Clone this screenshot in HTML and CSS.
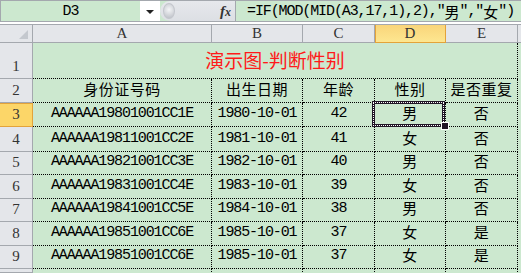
FILE: index.html
```html
<!DOCTYPE html>
<html lang="zh-CN">
<head>
  <meta charset="UTF-8" />
  <title>演示图-判断性别</title>
  <link rel="stylesheet" href="styles.css">
</head>
<body>
  <div class="formula-bar">
    <div class="name-box">D3</div>
    <div class="name-drop"><span class="caret"></span></div>
    <div class="bar-tools"><span class="grip"></span><span class="fx">f<i>x</i></span></div>
    <div class="formula">=IF(MOD(MID(A3,17,1),2),"<span class="cjk">男</span>","<span class="cjk">女</span>")</div>
  </div>
  <div class="bar-gap"></div>

  <div class="sheet">
    <div class="corner"></div>
    <div class="col-head">A</div>
    <div class="col-head">B</div>
    <div class="col-head">C</div>
    <div class="col-head active">D</div>
    <div class="col-head">E</div>
    <div class="col-head rest"></div>

    <div class="row-head">1</div>
    <div class="cell title">演示图-判断性别</div>
    <div class="cell rest"></div>

    <div class="row-head">2</div>
    <div class="cell cjk">身份证号码</div>
    <div class="cell cjk">出生日期</div>
    <div class="cell cjk">年龄</div>
    <div class="cell cjk">性别</div>
    <div class="cell cjk">是否重复</div>
    <div class="cell rest"></div>
  </div>

  <script>
    const sheet = document.querySelector(".sheet");
    const rows = [
      ["AAAAAA19801001CC1E", "1980-10-01", "42", "男", "否"],
      ["AAAAAA19811001CC2E", "1981-10-01", "41", "女", "否"],
      ["AAAAAA19821001CC3E", "1982-10-01", "40", "男", "否"],
      ["AAAAAA19831001CC4E", "1983-10-01", "39", "女", "否"],
      ["AAAAAA19841001CC5E", "1984-10-01", "38", "男", "否"],
      ["AAAAAA19851001CC6E", "1985-10-01", "37", "女", "是"],
      ["AAAAAA19851001CC6E", "1985-10-01", "37", "女", "是"]
    ];

    function addCell(cls, text) {
      const el = document.createElement("div");
      el.className = cls;
      el.textContent = text;
      sheet.appendChild(el);
      return el;
    }

    rows.forEach((r, i) => {
      const n = i + 3;
      addCell(n === 3 ? "row-head active" : "row-head", n);
      r.forEach((v, j) => {
        const cell = addCell(j > 2 ? "cell cjk" : "cell", v);
        if (n === 3 && j === 3) {
          cell.classList.add("selected");
          const handle = document.createElement("span");
          handle.className = "handle";
          cell.appendChild(handle);
        }
      });
      addCell("cell rest", "");
    });

    // sliver of row 10 at the bottom edge
    addCell("row-head", "");
    for (let j = 0; j < 5; j++) addCell("cell", "");
    addCell("cell rest", "");
  </script>
</body>
</html>
```

FILE: styles.css
```css
html, body {
  margin: 0;
  padding: 0;
  width: 521px;
  height: 273px;
  overflow: hidden;
  background: #cce8cf;
  font-family: "Liberation Mono", "Noto Sans CJK SC", monospace;
  color: #000;
}

.cjk {
  font-family: "Noto Sans CJK SC", sans-serif;
}

/* FORMULA BAR */
.formula-bar {
  display: flex;
  height: 20px;
  border-top: 1px solid #a4a8ae;
  border-bottom: 1px solid #a4a8ae;
  background: #cce8cf;
}

.name-box {
  width: 140px;
  border-left: 1px solid #a4a8ae;
  box-sizing: border-box;
  display: flex;
  align-items: center;
  justify-content: center;
  font-size: 15px;
  letter-spacing: -1px;
}

.name-drop {
  width: 20px;
  background: #fff;
  display: flex;
  align-items: center;
  justify-content: center;
}

.caret {
  width: 0;
  height: 0;
  border-left: 4px solid transparent;
  border-right: 4px solid transparent;
  border-top: 4px solid #222;
  margin-top: 2px;
}

.bar-tools {
  width: 76px;
  background: linear-gradient(#e6e8ec, #dcdfe4);
  border-radius: 10px 0 0 10px;
  border-right: 1px solid #a4a8ae;
  display: flex;
  align-items: center;
  justify-content: space-between;
  padding: 0 4px 0 3px;
  box-sizing: border-box;
}

.grip {
  width: 10px;
  height: 14px;
  border-radius: 50%;
  background: radial-gradient(circle at 50% 40%, #f4f5f7, #b8bcc3);
  border: 1px solid #c3c6cc;
}

.fx {
  font-family: "Liberation Serif", serif;
  font-style: italic;
  font-weight: bold;
  font-size: 15px;
  color: #333;
}

.fx i {
  font-size: 12px;
}

.formula {
  flex: 1;
  padding-left: 11px;
  display: flex;
  align-items: center;
  font-size: 15px;
  letter-spacing: -1.1px;
  white-space: nowrap;
  overflow: hidden;
}

.formula .cjk {
  font-size: 15px;
  letter-spacing: 0;
}

.bar-gap {
  height: 2px;
  background: #fff;
}

/* SHEET */
.sheet {
  display: grid;
  grid-template-columns: 33px 179px 91px 72px 71px 72px 1fr;
  grid-template-rows: 18px 36px 24px 24px 25px 23px 24px 23px 24px 23px 4px;
  border-top: 1px solid #a4a8ae;
}

.corner, .col-head, .row-head {
  background: #e4e6ea;
  box-sizing: border-box;
  color: #333;
  font-family: "Liberation Serif", serif;
  font-size: 15px;
}

.corner {
  border-right: 1px solid #a4a8ae;
  border-bottom: 1px solid #a4a8ae;
  position: relative;
}

.corner::after {
  content: "";
  position: absolute;
  right: 4px;
  bottom: 3px;
  border-left: 9px solid transparent;
  border-bottom: 9px solid #c4c8ce;
}

.col-head {
  border-right: 1px solid #a4a8ae;
  border-bottom: 1px solid #a4a8ae;
  display: flex;
  align-items: center;
  justify-content: center;
}

.col-head.rest {
  border-right: none;
}

.col-head.active {
  background: linear-gradient(#f9d57a, #fde690);
  border-right-color: #e3a33a;
  border-bottom-color: #e3a33a;
  box-shadow: inset 1px 0 0 #e3a33a;
}

.row-head {
  border-right: 1px solid #a4a8ae;
  border-bottom: 1px solid #a4a8ae;
  display: flex;
  align-items: flex-end;
  justify-content: center;
  padding-bottom: 3px;
  overflow: hidden;
}

.row-head.active {
  background: #fcd668;
  border-right-color: #e3a33a;
  border-bottom-color: #e3a33a;
  box-shadow: inset 0 1px 0 #e3a33a;
}

.cell {
  border-right: 1px dotted #000;
  border-bottom: 1px dotted #000;
  box-sizing: border-box;
  display: flex;
  align-items: flex-end;
  justify-content: center;
  padding-bottom: 4px;
  font-size: 15px;
  letter-spacing: -1.1px;
  white-space: nowrap;
  position: relative;
}

.cell.cjk {
  letter-spacing: 0.5px;
  padding-bottom: 3px;
}

.cell.rest {
  border-right: none;
  border-bottom: none;
}

.cell.title {
  grid-column: span 5;
  font-family: "Noto Sans CJK SC", sans-serif;
  color: #ff1a1a;
  font-size: 19px;
  letter-spacing: 0;
  padding-bottom: 5px;
}

/* ACTIVE CELL */
.cell.selected::before {
  content: "";
  position: absolute;
  top: -2px;
  left: -3px;
  right: 0;
  bottom: -1px;
  border: 3px solid #201526;
}

.cell.selected::after {
  content: "";
  position: absolute;
  top: -1px;
  left: -2px;
  right: 1px;
  bottom: 0;
  border: 1px dotted #fff;
}

.handle {
  position: absolute;
  right: -4px;
  bottom: -4px;
  width: 6px;
  height: 6px;
  background: #201526;
  border: 1px solid #fff;
  z-index: 2;
}
```
